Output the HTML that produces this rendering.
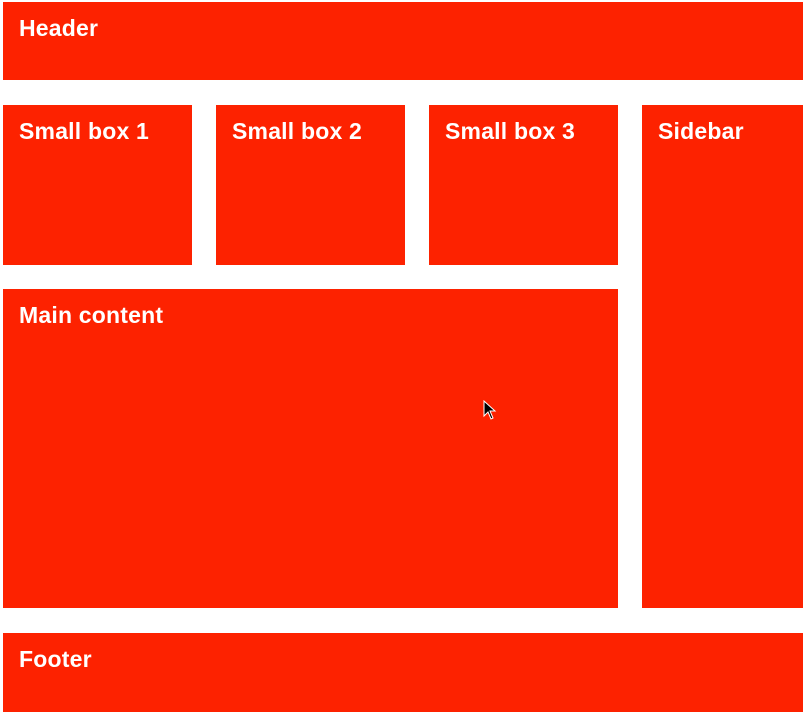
<!DOCTYPE html>
<html><head><style>
body{margin:0;width:804px;height:712px;background:#fff;position:relative;overflow:hidden;font-family:"Liberation Sans",Arial,sans-serif}
div{position:absolute;background:#fd2200;color:#fff;font-weight:bold;font-size:23px;letter-spacing:0.2px;box-sizing:border-box;padding:13px 0 0 16px;line-height:26px}
</style></head><body>
<div style="left:3px;top:2px;width:800px;height:78px">Header</div>
<div style="left:3px;top:105px;width:189px;height:160px">Small box 1</div>
<div style="left:216px;top:105px;width:189px;height:160px">Small box 2</div>
<div style="left:429px;top:105px;width:189px;height:160px">Small box 3</div>
<div style="left:642px;top:105px;width:161px;height:503px">Sidebar</div>
<div style="left:3px;top:289px;width:615px;height:319px">Main content</div>
<div style="left:3px;top:633px;width:800px;height:79px">Footer</div>
<svg style="position:absolute;left:483px;top:400px" width="14" height="22" viewBox="0 0 14 22"><path d="M1 1 L1 16 L5 12 L8 19 L10 18 L7 11 L12 11 Z" fill="#000" stroke="#fff" stroke-width="1"/></svg>
</body></html>
